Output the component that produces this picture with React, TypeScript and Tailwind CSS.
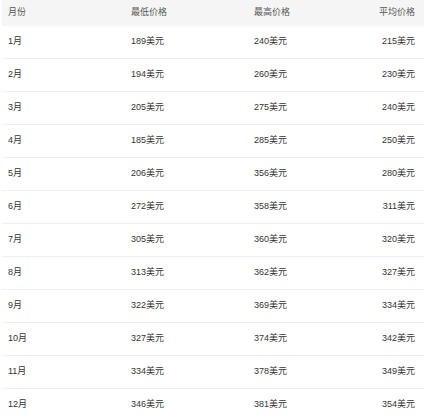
import React from "react";

const rows = [
  ["1月", "189美元", "240美元", "215美元"],
  ["2月", "194美元", "260美元", "230美元"],
  ["3月", "205美元", "275美元", "240美元"],
  ["4月", "185美元", "285美元", "250美元"],
  ["5月", "206美元", "356美元", "280美元"],
  ["6月", "272美元", "358美元", "311美元"],
  ["7月", "305美元", "360美元", "320美元"],
  ["8月", "313美元", "362美元", "327美元"],
  ["9月", "322美元", "369美元", "334美元"],
  ["10月", "327美元", "374美元", "342美元"],
  ["11月", "334美元", "378美元", "349美元"],
  ["12月", "346美元", "381美元", "354美元"],
];

export default function App() {
  return (
    <div
      className="w-[426px] h-[419px] overflow-hidden bg-white px-[2px]"
      style={{ fontFamily: '"Liberation Sans", "Noto Sans CJK SC", sans-serif' }}
    >
      <div className="grid grid-cols-[123px_123px_1fr_auto] h-[26px] items-center bg-[#f5f5f5] text-[9px] text-[#555]">
        <div className="pl-[6px]">月份</div>
        <div className="pl-[6px]">最低价格</div>
        <div className="pl-[6px]">最高价格</div>
        <div className="pr-[9px] text-right">平均价格</div>
      </div>
      {rows.map((r) => (
        <div
          key={r[0]}
          className="grid grid-cols-[123px_123px_1fr_auto] h-[33px] items-center border-b border-[#efefef] text-[9px] text-[#333]"
        >
          <div className="pl-[6px]">{r[0]}</div>
          <div className="pl-[6px]">{r[1]}</div>
          <div className="pl-[6px]">{r[2]}</div>
          <div className="pr-[9px] text-right">{r[3]}</div>
        </div>
      ))}
    </div>
  );
}
